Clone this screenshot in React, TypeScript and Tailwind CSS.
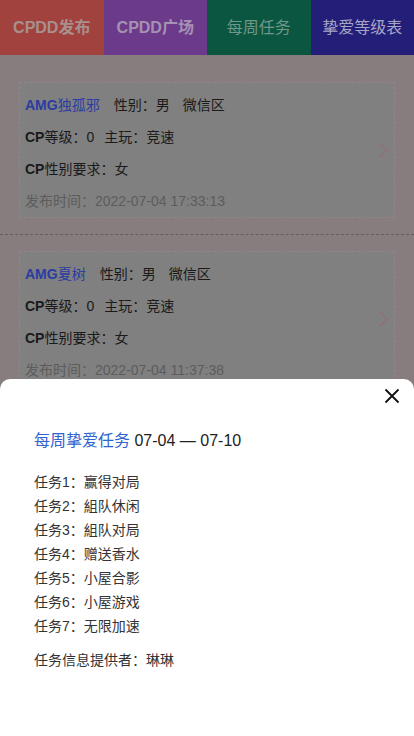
import React from "react";

const posts = [
  { name: "独孤邪", time: "2022-07-04 17:33:13" },
  { name: "夏树", time: "2022-07-04 11:37:38" },
  { name: "小鹿", time: "2022-07-04 10:12:05" },
];

const tasks = ["赢得对局", "組队休闲", "組队对局", "赠送香水", "小屋合影", "小屋游戏", "无限加速"];

// page behind the sheet, already dimmed by the mask
const Tabs: React.FC = () => (
  <div className="grid grid-cols-4 h-[55px] text-[16px]">
    <div className="bg-[#a2423f] flex items-center justify-center font-bold text-[#a8908d]">CPDD发布</div>
    <div className="bg-[#6c3a8a] flex items-center justify-center font-bold text-[#a592b2]">CPDD广场</div>
    <div className="bg-[#0a5640] flex items-center justify-center text-[#6f978a]">每周任务</div>
    <div className="bg-[#231f78] flex items-center justify-center text-[#a6a4c6]">挚爱等级表</div>
  </div>
);

const PostCard: React.FC<{ name: string; time: string }> = ({ name, time }) => (
  <div className="py-4 border-b border-dashed border-[#655d5d]">
    <div className="mx-[19px] border border-dashed border-[#95838a] bg-[#808080] flex items-center pl-[5px] pr-[6px] pt-[6px] text-[14px] text-[#1a1a1a]">
      <div className="flex-1">
        <div className="leading-[32px]">
          <span className="text-[#2a3ca2]">
            <b>AMG</b>
            {name}
          </span>
          <span className="ml-[14px]">性别：男</span>
          <span className="ml-[13px]">微信区</span>
        </div>
        <div className="leading-[32px]">
          <b>CP</b>等级：0<span className="ml-[10px]">主玩：竞速</span>
        </div>
        <div className="leading-[32px]">
          <b>CP</b>性别要求：女
        </div>
        <div className="leading-[32px] text-[#5c5c5c]">发布时间：{time}</div>
      </div>
      <svg width="9" height="16" viewBox="0 0 9 16" fill="none" className="-mt-[6px]">
        <path d="M1 1l7 7-7 7" stroke="#8e6f77" strokeWidth="1.4" />
      </svg>
    </div>
  </div>
);

export default function App() {
  return (
    <div
      className="relative h-[736px] w-[414px] overflow-hidden bg-[#877d7e]"
      style={{ fontFamily: '"Liberation Sans", "Noto Sans CJK SC", sans-serif' }}
    >
      <Tabs />
      <div className="pt-[11px]">
        {posts.map((p) => (
          <PostCard key={p.time} name={p.name} time={p.time} />
        ))}
      </div>

      <div className="absolute left-0 right-0 bottom-0 h-[357px] bg-white rounded-t-[10px] pt-[9px]">
        <div className="flex justify-end pr-[14px]">
          <svg width="16" height="16" viewBox="0 0 16 16">
            <path d="M1.5 1.5l13 13M14.5 1.5l-13 13" stroke="#111" strokeWidth="1.8" />
          </svg>
        </div>
        <div className="px-[34px]">
          <div className="mt-[25px] text-[16px] leading-[24px] text-[#222]">
            <span className="text-[#2f63cf]">每周挚爱任务</span> 07-04 — 07-10
          </div>
          <div className="mt-[17px] text-[14px] leading-[24px] text-[#333]">
            {tasks.map((t, i) => (
              <div key={i}>
                任务{i + 1}：{t}
              </div>
            ))}
            <div className="mt-[10px]">任务信息提供者：琳琳</div>
          </div>
        </div>
      </div>
    </div>
  );
}
